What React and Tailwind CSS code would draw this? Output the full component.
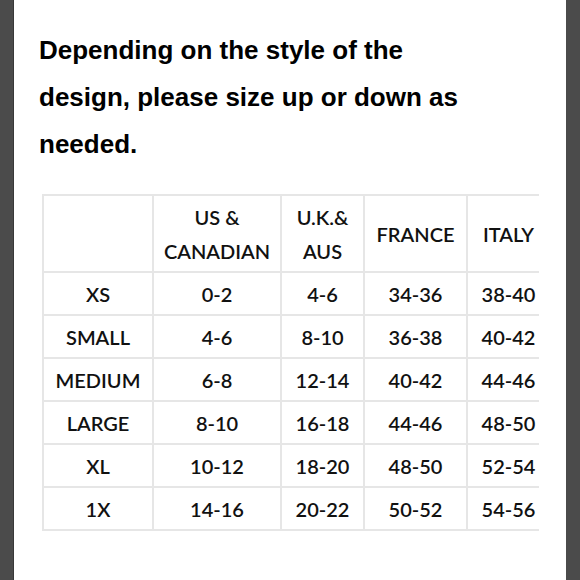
import React from "react";

const header = ["", "US &\nCANADIAN", "U.K.&\nAUS", "FRANCE", "ITALY"];
const rows = [
  ["XS", "0-2", "4-6", "34-36", "38-40"],
  ["SMALL", "4-6", "8-10", "36-38", "40-42"],
  ["MEDIUM", "6-8", "12-14", "40-42", "44-46"],
  ["LARGE", "8-10", "16-18", "44-46", "48-50"],
  ["XL", "10-12", "18-20", "48-50", "52-54"],
  ["1X", "14-16", "20-22", "50-52", "54-56"],
];

export default function App() {
  return (
    <div className="flex h-[580px] w-[580px] bg-[#4b4b4b]">
      <div className="ml-[13px] w-[1px] bg-[#383838]" />
      <div className="flex w-[552px] flex-col bg-white pl-[25px]">
        <h1
          className="mt-[27px] text-[26px] font-bold leading-[47px] text-black"
          style={{ fontFamily: '"Liberation Sans", Arial, sans-serif' }}
        >
          Depending on the style of the
          <br />
          design, please size up or down as
          <br />
          needed.
        </h1>
        <div className="ml-[3px] mt-[26px] w-[497px] overflow-hidden">
          <div
            className="grid w-[507px] grid-cols-[108px_126px_81px_101px_81px] grid-rows-[75px_repeat(6,41px)] gap-[2px] bg-[#e6e6e6] p-[2px] text-[20px] font-semibold text-[#111]"
            style={{ fontFamily: "Lato, sans-serif" }}
          >
            {header.map((h, i) => (
              <div
                key={"h" + i}
                className="flex flex-col items-center justify-center bg-white text-center leading-[34px]"
              >
                {h.split("\n").map((l, j) => (
                  <span key={j}>{l}</span>
                ))}
              </div>
            ))}
            {rows.map((r, ri) =>
              r.map((c, ci) => (
                <div
                  key={ri + "-" + ci}
                  className="flex items-center justify-center bg-white"
                >
                  {c}
                </div>
              ))
            )}
          </div>
        </div>
      </div>
    </div>
  );
}
